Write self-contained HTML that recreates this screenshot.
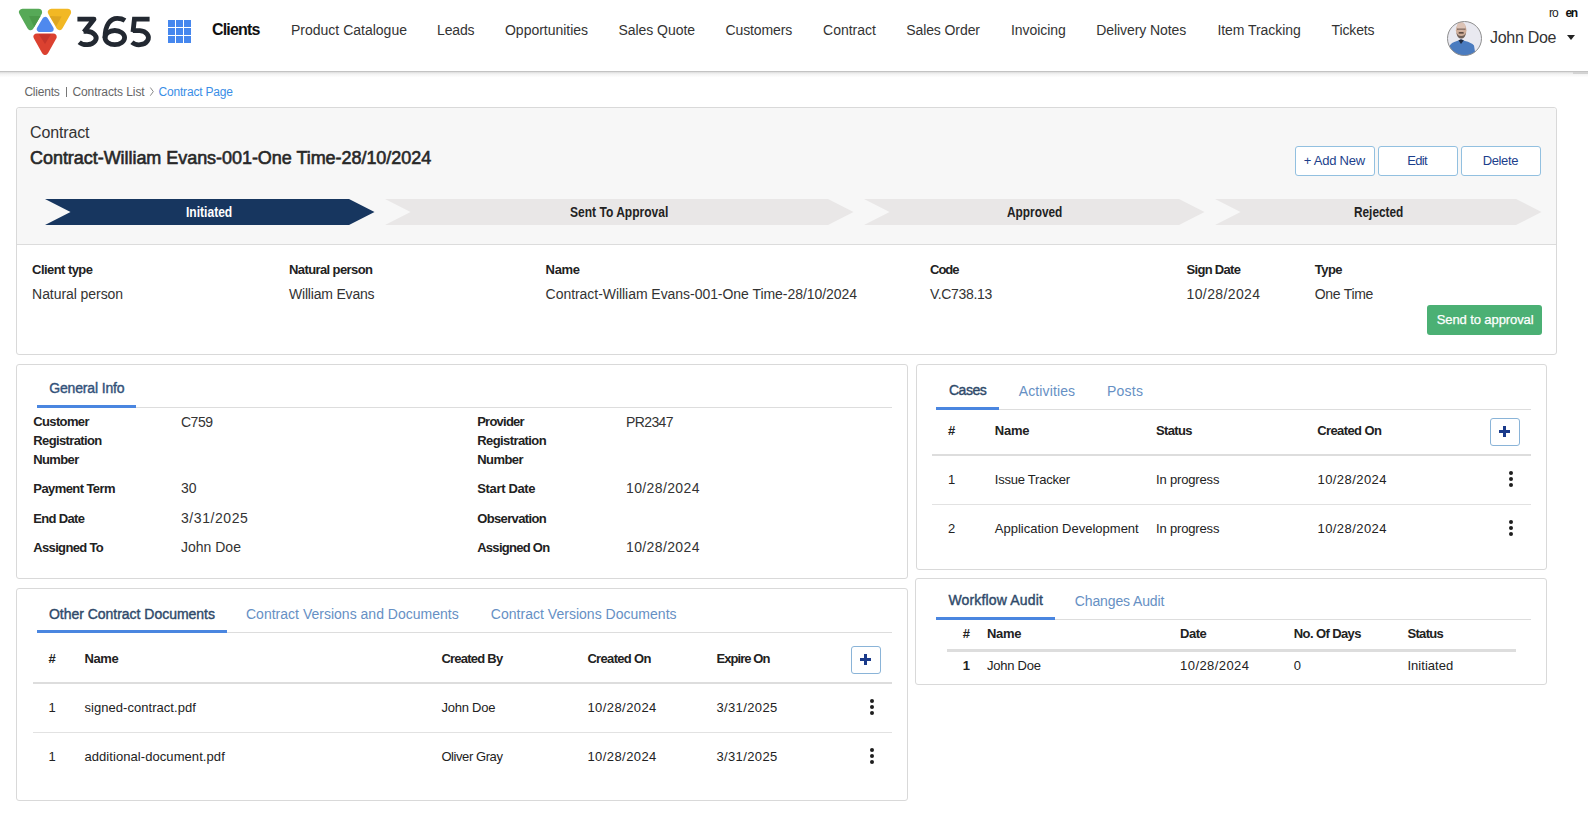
<!DOCTYPE html>
<html><head><meta charset="utf-8"><style>
html,body{margin:0;padding:0;background:#fff;width:1588px;height:831px;overflow:hidden;position:relative;font-family:"Liberation Sans",sans-serif}
.a{position:absolute}
.t{position:absolute;white-space:nowrap}
</style></head><body>
<div class="a" style="left:0px;top:71px;width:1588px;height:1px;background:#c3c3c3"></div>
<div class="a" style="left:0px;top:72px;width:1588px;height:5px;background:linear-gradient(#dcdcdc,#f3f3f3 40%,#fdfdfd)"></div>
<div class="a" style="left:1573px;top:72px;width:15px;height:2px;background:#d3d3d3"></div>
<svg class="a" style="left:0;top:0" width="160" height="60" viewBox="0 0 160 60">
<g stroke-linejoin="round" stroke-width="7">
<polygon points="22.5,12.3 38.6,12.3 30.5,26.6" fill="#56a957" stroke="#56a957"/>
<polygon points="51.4,12.3 67.6,12.3 59.5,26.5" fill="#f2b824" stroke="#f2b824"/>
<polygon points="37,36.9 53.2,36.9 45.1,51.4" fill="#db4130" stroke="#db4130"/>
</g>
<polygon points="29,16 40.6,16 34.2,27" fill="#4b9a4a"/>
<polygon points="49.6,16 61.6,16.5 56.2,26.3" fill="#dea621"/>
<polygon points="38.8,34.3 51,34.3 45,44" fill="#c5352b"/>
<polygon points="45.3,19.9 39.8,29.1 50.7,29.1" fill="#4f89ee" stroke="#4f89ee" stroke-width="6" stroke-linejoin="round"/>
<g fill="none" stroke="#222831" stroke-width="4.8">
<path d="M77.4,19.2 H94 L83.9,31.9" stroke-linejoin="round"/>
<path d="M83.6,31.4 H87 A9.5,6.65 0 1 1 79.2,42.2"/>
<ellipse cx="114.8" cy="37.6" rx="9.8" ry="7.1"/>
<path d="M105,38 C105,24.8 110.2,18.4 117.3,18.4 C120.6,18.4 123,19.2 125,20.5"/>
<path d="M149.6,19.2 H134.4 L133,32"/>
<path d="M132.8,30.6 H139.8 A9.4,7.1 0 1 1 131.9,42.3"/>
</g>
</svg>
<div class="a" style="left:168px;top:20px;width:7px;height:7px;background:#4687ee"></div><div class="a" style="left:176px;top:20px;width:7px;height:7px;background:#4687ee"></div><div class="a" style="left:184px;top:20px;width:7px;height:7px;background:#4687ee"></div><div class="a" style="left:168px;top:28px;width:7px;height:7px;background:#4687ee"></div><div class="a" style="left:176px;top:28px;width:7px;height:7px;background:#4687ee"></div><div class="a" style="left:184px;top:28px;width:7px;height:7px;background:#4687ee"></div><div class="a" style="left:168px;top:36px;width:7px;height:7px;background:#4687ee"></div><div class="a" style="left:176px;top:36px;width:7px;height:7px;background:#4687ee"></div><div class="a" style="left:184px;top:36px;width:7px;height:7px;background:#4687ee"></div>
<div class="t" style="left:212.00px;top:21.50px;font-size:16px;line-height:16px;color:#111;font-weight:bold;letter-spacing:-0.833px;">Clients</div>
<div class="t" style="left:291.00px;top:23.00px;font-size:14px;line-height:14px;color:#333;">Product Catalogue</div>
<div class="t" style="left:437.00px;top:23.00px;font-size:14px;line-height:14px;color:#333;letter-spacing:-0.150px;">Leads</div>
<div class="t" style="left:505.00px;top:23.00px;font-size:14px;line-height:14px;color:#333;letter-spacing:-0.017px;">Opportunities</div>
<div class="t" style="left:618.40px;top:23.00px;font-size:14px;line-height:14px;color:#333;letter-spacing:-0.040px;">Sales Quote</div>
<div class="t" style="left:725.60px;top:23.00px;font-size:14px;line-height:14px;color:#333;letter-spacing:-0.138px;">Customers</div>
<div class="t" style="left:823.10px;top:23.00px;font-size:14px;line-height:14px;color:#333;letter-spacing:-0.014px;">Contract</div>
<div class="t" style="left:906.20px;top:23.00px;font-size:14px;line-height:14px;color:#333;letter-spacing:-0.090px;">Sales Order</div>
<div class="t" style="left:1011.00px;top:23.00px;font-size:14px;line-height:14px;color:#333;letter-spacing:-0.062px;">Invoicing</div>
<div class="t" style="left:1096.30px;top:23.00px;font-size:14px;line-height:14px;color:#333;letter-spacing:-0.077px;">Delivery Notes</div>
<div class="t" style="left:1217.40px;top:23.00px;font-size:14px;line-height:14px;color:#333;letter-spacing:-0.058px;">Item Tracking</div>
<div class="t" style="left:1331.50px;top:23.00px;font-size:14px;line-height:14px;color:#333;letter-spacing:-0.117px;">Tickets</div>
<div class="t" style="left:1549.00px;top:7.00px;font-size:12px;line-height:12px;color:#222;letter-spacing:-1.000px;">ro</div>
<div class="t" style="left:1565.50px;top:7.00px;font-size:12px;line-height:12px;color:#111;font-weight:bold;letter-spacing:-1.500px;">en</div>
<svg class="a" style="left:1446px;top:20px" width="37" height="37" viewBox="0 0 37 37">
<defs><clipPath id="av"><circle cx="18.5" cy="18.5" r="17"/></clipPath></defs>
<g clip-path="url(#av)">
<rect width="37" height="37" fill="#e9e9f0"/>
<path d="M3,38 L3.5,26 Q5,22.5 11,21 L15,19.5 L19,21 Q25.5,22.5 28,25.5 L30,38 Z" fill="#4a7bbf"/>
<path d="M12.5,20.3 L15,24 L17.8,20.3 L15,19.3 Z" fill="#1f2b42"/>
<ellipse cx="15.2" cy="10.3" rx="5.3" ry="8" fill="#cfae9a"/>
<ellipse cx="15.2" cy="6.5" rx="4.2" ry="4" fill="#dcc3b6"/>
<rect x="11" y="8.5" width="8.5" height="1.3" fill="#5b463d" opacity="0.7"/>
<path d="M10.5,12.5 Q11,18.5 15.2,18.6 Q19.4,18.5 19.9,12.5 Q18.5,16 15.2,16 Q11.9,16 10.5,12.5 Z" fill="#6f6058"/>
<rect x="12.6" y="12.2" width="5.2" height="1.4" rx="0.7" fill="#3a2a25"/>
</g>
<circle cx="18.5" cy="18.5" r="17" fill="none" stroke="#8e8e8e" stroke-width="1"/>
</svg>
<div class="t" style="left:1490.00px;top:29.50px;font-size:16px;line-height:16px;color:#333;letter-spacing:-0.286px;">John Doe</div>
<div class="a" style="left:1567px;top:35px;width:0;height:0;border-left:4.5px solid transparent;border-right:4.5px solid transparent;border-top:5px solid #222"></div>
<div class="t" style="left:24.40px;top:86.00px;font-size:12px;line-height:12px;color:#666;letter-spacing:-0.200px;">Clients</div>
<div class="a" style="left:66px;top:87px;width:1px;height:10px;background:#777"></div>
<div class="t" style="left:72.40px;top:86.00px;font-size:12px;line-height:12px;color:#666;letter-spacing:-0.085px;">Contracts List</div>
<svg class="a" style="left:149px;top:87px" width="6" height="10"><path d="M1.3,0.5 L4.3,4.6 L1.3,8.7" fill="none" stroke="#8a8a8a" stroke-width="1"/></svg>
<div class="t" style="left:158.50px;top:86.00px;font-size:12px;line-height:12px;color:#3a8ee6;letter-spacing:-0.183px;">Contract Page</div>
<div class="a" style="left:16px;top:107px;width:1541px;height:248px;border:1px solid #d9d9d9;border-radius:3px;background:#fff;box-sizing:border-box"></div>
<div class="a" style="left:17px;top:108px;width:1539px;height:136px;background:#f7f7f7;border-radius:3px 3px 0 0"></div>
<div class="a" style="left:17px;top:244px;width:1539px;height:1px;background:#dcdcdc"></div>
<div class="t" style="left:30.00px;top:125.00px;font-size:16px;line-height:16px;color:#333;letter-spacing:-0.143px;">Contract</div>
<div class="t" style="left:30.00px;top:148.50px;font-size:18px;line-height:18px;color:#282828;letter-spacing:-0.044px;-webkit-text-stroke:0.6px #282828;">Contract-William Evans-001-One Time-28/10/2024</div>
<div class="a" style="left:1295px;top:146px;width:80px;height:30px;border:1px solid #92c0e0;border-radius:3px;background:#fff;box-sizing:border-box"></div>
<div class="t" style="left:1303.80px;top:154.30px;font-size:13px;line-height:13px;color:#1c3f8c;letter-spacing:-0.237px;">+ Add New</div>
<div class="a" style="left:1378px;top:146px;width:80px;height:30px;border:1px solid #92c0e0;border-radius:3px;background:#fff;box-sizing:border-box"></div>
<div class="t" style="left:1407.20px;top:154.30px;font-size:13px;line-height:13px;color:#1c3f8c;letter-spacing:-0.633px;">Edit</div>
<div class="a" style="left:1461px;top:146px;width:80px;height:30px;border:1px solid #92c0e0;border-radius:3px;background:#fff;box-sizing:border-box"></div>
<div class="t" style="left:1482.70px;top:154.30px;font-size:13px;line-height:13px;color:#1c3f8c;letter-spacing:-0.360px;">Delete</div>
<svg class="a" style="left:0;top:0" width="1588" height="260">
<polygon points="45,199 349,199 374.5,212 349,225 45,225 70.5,212" fill="#17365f"/>
<polygon points="385,199 828,199 853.5,212 828,225 385,225 410.5,212" fill="#e9e7e7"/>
<polygon points="864,199 1179,199 1204.5,212 1179,225 864,225 889.5,212" fill="#e9e7e7"/>
<polygon points="1215,199 1516,199 1541.5,212 1516,225 1215,225 1240.5,212" fill="#e9e7e7"/>
</svg>
<div class="t" style="left:186.40px;top:204.50px;font-size:14px;line-height:14px;color:#fff;font-weight:bold;transform:scaleX(0.8611);transform-origin:0px 0;">Initiated</div>
<div class="t" style="left:570.00px;top:204.50px;font-size:14px;line-height:14px;color:#222;font-weight:bold;transform:scaleX(0.8596);transform-origin:0px 0;">Sent To Approval</div>
<div class="t" style="left:1007.00px;top:204.50px;font-size:14px;line-height:14px;color:#222;font-weight:bold;transform:scaleX(0.8462);transform-origin:0px 0;">Approved</div>
<div class="t" style="left:1354.00px;top:204.50px;font-size:14px;line-height:14px;color:#222;font-weight:bold;transform:scaleX(0.8448);transform-origin:0px 0;">Rejected</div>
<div class="t" style="left:32.10px;top:263.40px;font-size:13px;line-height:13px;color:#222;font-weight:bold;letter-spacing:-0.560px;">Client type</div>
<div class="t" style="left:32.10px;top:287.10px;font-size:14px;line-height:14px;color:#333;letter-spacing:-0.062px;">Natural person</div>
<div class="t" style="left:289.00px;top:263.40px;font-size:13px;line-height:13px;color:#222;font-weight:bold;letter-spacing:-0.600px;">Natural person</div>
<div class="t" style="left:289.00px;top:287.10px;font-size:14px;line-height:14px;color:#333;letter-spacing:-0.192px;">William Evans</div>
<div class="t" style="left:545.60px;top:263.40px;font-size:13px;line-height:13px;color:#222;font-weight:bold;letter-spacing:-0.333px;">Name</div>
<div class="t" style="left:545.60px;top:287.10px;font-size:14px;line-height:14px;color:#333;letter-spacing:-0.047px;">Contract-William Evans-001-One Time-28/10/2024</div>
<div class="t" style="left:930.00px;top:263.40px;font-size:13px;line-height:13px;color:#222;font-weight:bold;letter-spacing:-1.000px;">Code</div>
<div class="t" style="left:930.00px;top:287.10px;font-size:14px;line-height:14px;color:#333;letter-spacing:-0.312px;">V.C738.13</div>
<div class="t" style="left:1186.50px;top:263.40px;font-size:13px;line-height:13px;color:#222;font-weight:bold;letter-spacing:-0.688px;">Sign Date</div>
<div class="t" style="left:1186.50px;top:287.10px;font-size:14px;line-height:14px;color:#333;letter-spacing:0.389px;">10/28/2024</div>
<div class="t" style="left:1314.70px;top:263.40px;font-size:13px;line-height:13px;color:#222;font-weight:bold;letter-spacing:-0.500px;">Type</div>
<div class="t" style="left:1314.70px;top:287.10px;font-size:14px;line-height:14px;color:#333;letter-spacing:-0.286px;">One Time</div>
<div class="a" style="left:1427px;top:305px;width:115px;height:30px;background:#4bb074;border-radius:3px"></div>
<div class="t" style="left:1436.70px;top:313.10px;font-size:13px;line-height:13px;color:#fff;letter-spacing:-0.093px;-webkit-text-stroke:0.25px #fff;">Send to approval</div>
<div class="a" style="left:16px;top:364px;width:892px;height:215px;border:1px solid #d9d9d9;border-radius:3px;box-sizing:border-box"></div>
<div class="a" style="left:37px;top:407px;width:855px;height:1px;background:#ddd"></div>
<div class="a" style="left:37px;top:405px;width:99px;height:3px;background:#4a86e0"></div>
<div class="t" style="left:49.20px;top:381.30px;font-size:14px;line-height:14px;color:#33527a;letter-spacing:-0.145px;-webkit-text-stroke:0.4px #33527a;">General Info</div>
<div class="t" style="left:33.30px;top:415.30px;font-size:13px;line-height:13px;color:#222;font-weight:bold;letter-spacing:-0.643px;">Customer</div>
<div class="t" style="left:33.30px;top:434.30px;font-size:13px;line-height:13px;color:#222;font-weight:bold;letter-spacing:-0.636px;">Registration</div>
<div class="t" style="left:33.30px;top:453.30px;font-size:13px;line-height:13px;color:#222;font-weight:bold;letter-spacing:-0.640px;">Number</div>
<div class="t" style="left:181.00px;top:415.00px;font-size:14px;line-height:14px;color:#333;letter-spacing:-0.500px;">C759</div>
<div class="t" style="left:33.30px;top:482.30px;font-size:13px;line-height:13px;color:#222;font-weight:bold;letter-spacing:-0.582px;">Payment Term</div>
<div class="t" style="left:181.00px;top:481.00px;font-size:14px;line-height:14px;color:#333;">30</div>
<div class="t" style="left:33.30px;top:512.30px;font-size:13px;line-height:13px;color:#222;font-weight:bold;letter-spacing:-0.671px;">End Date</div>
<div class="t" style="left:181.00px;top:511.00px;font-size:14px;line-height:14px;color:#333;letter-spacing:0.575px;">3/31/2025</div>
<div class="t" style="left:33.30px;top:541.30px;font-size:13px;line-height:13px;color:#222;font-weight:bold;letter-spacing:-0.660px;">Assigned To</div>
<div class="t" style="left:181.00px;top:540.00px;font-size:14px;line-height:14px;color:#333;">John Doe</div>
<div class="t" style="left:477.20px;top:415.30px;font-size:13px;line-height:13px;color:#222;font-weight:bold;letter-spacing:-0.757px;">Provider</div>
<div class="t" style="left:477.20px;top:434.30px;font-size:13px;line-height:13px;color:#222;font-weight:bold;letter-spacing:-0.582px;">Registration</div>
<div class="t" style="left:477.20px;top:453.30px;font-size:13px;line-height:13px;color:#222;font-weight:bold;letter-spacing:-0.560px;">Number</div>
<div class="t" style="left:626.00px;top:415.00px;font-size:14px;line-height:14px;color:#333;letter-spacing:-0.600px;">PR2347</div>
<div class="t" style="left:477.20px;top:482.30px;font-size:13px;line-height:13px;color:#222;font-weight:bold;letter-spacing:-0.333px;">Start Date</div>
<div class="t" style="left:626.00px;top:481.00px;font-size:14px;line-height:14px;color:#333;letter-spacing:0.378px;">10/28/2024</div>
<div class="t" style="left:477.20px;top:512.30px;font-size:13px;line-height:13px;color:#222;font-weight:bold;letter-spacing:-0.640px;">Observation</div>
<div class="t" style="left:477.20px;top:541.30px;font-size:13px;line-height:13px;color:#222;font-weight:bold;letter-spacing:-0.720px;">Assigned On</div>
<div class="t" style="left:626.00px;top:540.00px;font-size:14px;line-height:14px;color:#333;letter-spacing:0.378px;">10/28/2024</div>
<div class="a" style="left:16px;top:588px;width:892px;height:213px;border:1px solid #d9d9d9;border-radius:3px;box-sizing:border-box"></div>
<div class="a" style="left:37px;top:632px;width:855px;height:1px;background:#ddd"></div>
<div class="a" style="left:37px;top:630px;width:190px;height:3px;background:#4a86e0"></div>
<div class="t" style="left:49.00px;top:606.50px;font-size:14px;line-height:14px;color:#2f4a6a;letter-spacing:-0.026px;-webkit-text-stroke:0.4px #2f4a6a;">Other Contract Documents</div>
<div class="t" style="left:246.00px;top:607.00px;font-size:14px;line-height:14px;color:#6690c4;letter-spacing:0.010px;">Contract Versions and Documents</div>
<div class="t" style="left:490.80px;top:607.00px;font-size:14px;line-height:14px;color:#6690c4;letter-spacing:0.023px;">Contract Versions Documents</div>
<div class="t" style="left:48.40px;top:652.20px;font-size:13px;line-height:13px;color:#222;font-weight:bold;">#</div>
<div class="t" style="left:84.40px;top:652.20px;font-size:13px;line-height:13px;color:#222;font-weight:bold;letter-spacing:-0.333px;">Name</div>
<div class="t" style="left:441.40px;top:652.20px;font-size:13px;line-height:13px;color:#222;font-weight:bold;letter-spacing:-0.767px;">Created By</div>
<div class="t" style="left:587.40px;top:652.20px;font-size:13px;line-height:13px;color:#222;font-weight:bold;letter-spacing:-0.667px;">Created On</div>
<div class="t" style="left:716.40px;top:652.20px;font-size:13px;line-height:13px;color:#222;font-weight:bold;letter-spacing:-0.912px;">Expire On</div>
<div class="a" style="left:851px;top:646px;width:30px;height:28px;border:1px solid #8ab4d8;border-radius:3px;box-sizing:border-box"></div>
<div class="a" style="left:33px;top:682px;width:859px;height:2px;background:#ddd"></div>
<div class="a" style="left:33px;top:732px;width:859px;height:1px;background:#e2e2e2"></div>
<div class="t" style="left:48.40px;top:701.00px;font-size:13px;line-height:13px;color:#222;">1</div>
<div class="t" style="left:84.40px;top:701.00px;font-size:13px;line-height:13px;color:#222;letter-spacing:0.050px;">signed-contract.pdf</div>
<div class="t" style="left:441.40px;top:701.00px;font-size:13px;line-height:13px;color:#222;letter-spacing:-0.214px;">John Doe</div>
<div class="t" style="left:587.40px;top:701.00px;font-size:13px;line-height:13px;color:#222;letter-spacing:0.433px;">10/28/2024</div>
<div class="t" style="left:716.40px;top:701.00px;font-size:13px;line-height:13px;color:#222;letter-spacing:0.375px;">3/31/2025</div>
<div class="t" style="left:48.40px;top:750.00px;font-size:13px;line-height:13px;color:#222;">1</div>
<div class="t" style="left:84.40px;top:750.00px;font-size:13px;line-height:13px;color:#222;letter-spacing:0.073px;">additional-document.pdf</div>
<div class="t" style="left:441.40px;top:750.00px;font-size:13px;line-height:13px;color:#222;letter-spacing:-0.420px;">Oliver Gray</div>
<div class="t" style="left:587.40px;top:750.00px;font-size:13px;line-height:13px;color:#222;letter-spacing:0.433px;">10/28/2024</div>
<div class="t" style="left:716.40px;top:750.00px;font-size:13px;line-height:13px;color:#222;letter-spacing:0.375px;">3/31/2025</div>
<div class="a" style="left:916px;top:364px;width:631px;height:206px;border:1px solid #d9d9d9;border-radius:3px;box-sizing:border-box"></div>
<div class="a" style="left:936px;top:409px;width:595px;height:1px;background:#ddd"></div>
<div class="a" style="left:936px;top:407px;width:63px;height:3px;background:#4a86e0"></div>
<div class="t" style="left:949.00px;top:383.20px;font-size:14px;line-height:14px;color:#2f4a6a;letter-spacing:-0.500px;-webkit-text-stroke:0.4px #2f4a6a;">Cases</div>
<div class="t" style="left:1018.70px;top:384.00px;font-size:14px;line-height:14px;color:#6690c4;letter-spacing:0.133px;">Activities</div>
<div class="t" style="left:1107.00px;top:384.00px;font-size:14px;line-height:14px;color:#6690c4;letter-spacing:0.250px;">Posts</div>
<div class="t" style="left:948.00px;top:424.00px;font-size:13px;line-height:13px;color:#222;font-weight:bold;">#</div>
<div class="t" style="left:994.80px;top:424.00px;font-size:13px;line-height:13px;color:#222;font-weight:bold;letter-spacing:-0.267px;">Name</div>
<div class="t" style="left:1155.90px;top:424.00px;font-size:13px;line-height:13px;color:#222;font-weight:bold;letter-spacing:-0.620px;">Status</div>
<div class="t" style="left:1317.20px;top:424.00px;font-size:13px;line-height:13px;color:#222;font-weight:bold;letter-spacing:-0.600px;">Created On</div>
<div class="a" style="left:1490px;top:418px;width:30px;height:28px;border:1px solid #8ab4d8;border-radius:3px;box-sizing:border-box"></div>
<div class="a" style="left:932px;top:454px;width:599px;height:2px;background:#ddd"></div>
<div class="a" style="left:932px;top:504px;width:599px;height:1px;background:#e2e2e2"></div>
<div class="t" style="left:948.00px;top:473.00px;font-size:13px;line-height:13px;color:#222;">1</div>
<div class="t" style="left:994.80px;top:473.00px;font-size:13px;line-height:13px;color:#222;letter-spacing:-0.233px;">Issue Tracker</div>
<div class="t" style="left:1156.00px;top:473.00px;font-size:13px;line-height:13px;color:#222;letter-spacing:-0.160px;">In progress</div>
<div class="t" style="left:1317.50px;top:473.00px;font-size:13px;line-height:13px;color:#222;letter-spacing:0.433px;">10/28/2024</div>
<div class="t" style="left:948.00px;top:522.00px;font-size:13px;line-height:13px;color:#222;">2</div>
<div class="t" style="left:994.80px;top:522.00px;font-size:13px;line-height:13px;color:#222;letter-spacing:0.005px;">Application Development</div>
<div class="t" style="left:1156.00px;top:522.00px;font-size:13px;line-height:13px;color:#222;letter-spacing:-0.160px;">In progress</div>
<div class="t" style="left:1317.50px;top:522.00px;font-size:13px;line-height:13px;color:#222;letter-spacing:0.433px;">10/28/2024</div>
<div class="a" style="left:915px;top:578px;width:632px;height:107px;border:1px solid #d9d9d9;border-radius:3px;box-sizing:border-box"></div>
<div class="a" style="left:936px;top:619px;width:595px;height:1px;background:#ddd"></div>
<div class="a" style="left:936px;top:617px;width:119px;height:3px;background:#4a86e0"></div>
<div class="t" style="left:948.40px;top:593.40px;font-size:14px;line-height:14px;color:#2f4a6a;letter-spacing:0.169px;-webkit-text-stroke:0.4px #2f4a6a;">Workflow Audit</div>
<div class="t" style="left:1074.80px;top:594.00px;font-size:14px;line-height:14px;color:#6690c4;letter-spacing:-0.125px;">Changes Audit</div>
<div class="t" style="left:962.70px;top:627.00px;font-size:13px;line-height:13px;color:#222;font-weight:bold;">#</div>
<div class="t" style="left:986.90px;top:627.00px;font-size:13px;line-height:13px;color:#222;font-weight:bold;letter-spacing:-0.300px;">Name</div>
<div class="t" style="left:1180.10px;top:627.00px;font-size:13px;line-height:13px;color:#222;font-weight:bold;letter-spacing:-0.500px;">Date</div>
<div class="t" style="left:1293.80px;top:627.00px;font-size:13px;line-height:13px;color:#222;font-weight:bold;letter-spacing:-0.600px;">No. Of Days</div>
<div class="t" style="left:1407.50px;top:627.00px;font-size:13px;line-height:13px;color:#222;font-weight:bold;letter-spacing:-0.700px;">Status</div>
<div class="a" style="left:947px;top:649px;width:569px;height:3px;background:#ddd"></div>
<div class="t" style="left:962.70px;top:659.30px;font-size:13px;line-height:13px;color:#222;font-weight:bold;">1</div>
<div class="t" style="left:986.90px;top:659.00px;font-size:13px;line-height:13px;color:#222;letter-spacing:-0.214px;">John Doe</div>
<div class="t" style="left:1180.10px;top:659.00px;font-size:13px;line-height:13px;color:#222;letter-spacing:0.422px;">10/28/2024</div>
<div class="t" style="left:1293.80px;top:659.00px;font-size:13px;line-height:13px;color:#222;">0</div>
<div class="t" style="left:1407.50px;top:659.00px;font-size:13px;line-height:13px;color:#222;letter-spacing:0.013px;">Initiated</div>
<div class="a" style="left:1498.8999999999999px;top:429.9px;width:11.4px;height:3.2px;background:#1a3a8a"></div><div class="a" style="left:1503.0px;top:425.9px;width:3.2px;height:11.2px;background:#1a3a8a"></div>
<div class="a" style="left:859.8px;top:657.9px;width:11.4px;height:3.2px;background:#1a3a8a"></div><div class="a" style="left:863.9px;top:653.9px;width:3.2px;height:11.2px;background:#1a3a8a"></div>
<div class="a" style="left:1508.65px;top:470.65px;width:4.5px;height:4.5px;border-radius:50%;background:#1e1e1e"></div>
<div class="a" style="left:1508.65px;top:476.65px;width:4.5px;height:4.5px;border-radius:50%;background:#1e1e1e"></div>
<div class="a" style="left:1508.65px;top:482.65px;width:4.5px;height:4.5px;border-radius:50%;background:#1e1e1e"></div>
<div class="a" style="left:1508.65px;top:519.85px;width:4.5px;height:4.5px;border-radius:50%;background:#1e1e1e"></div>
<div class="a" style="left:1508.65px;top:525.85px;width:4.5px;height:4.5px;border-radius:50%;background:#1e1e1e"></div>
<div class="a" style="left:1508.65px;top:531.85px;width:4.5px;height:4.5px;border-radius:50%;background:#1e1e1e"></div>
<div class="a" style="left:869.65px;top:698.65px;width:4.5px;height:4.5px;border-radius:50%;background:#1e1e1e"></div>
<div class="a" style="left:869.65px;top:704.65px;width:4.5px;height:4.5px;border-radius:50%;background:#1e1e1e"></div>
<div class="a" style="left:869.65px;top:710.65px;width:4.5px;height:4.5px;border-radius:50%;background:#1e1e1e"></div>
<div class="a" style="left:869.65px;top:747.55px;width:4.5px;height:4.5px;border-radius:50%;background:#1e1e1e"></div>
<div class="a" style="left:869.65px;top:753.55px;width:4.5px;height:4.5px;border-radius:50%;background:#1e1e1e"></div>
<div class="a" style="left:869.65px;top:759.55px;width:4.5px;height:4.5px;border-radius:50%;background:#1e1e1e"></div>
</body></html>
